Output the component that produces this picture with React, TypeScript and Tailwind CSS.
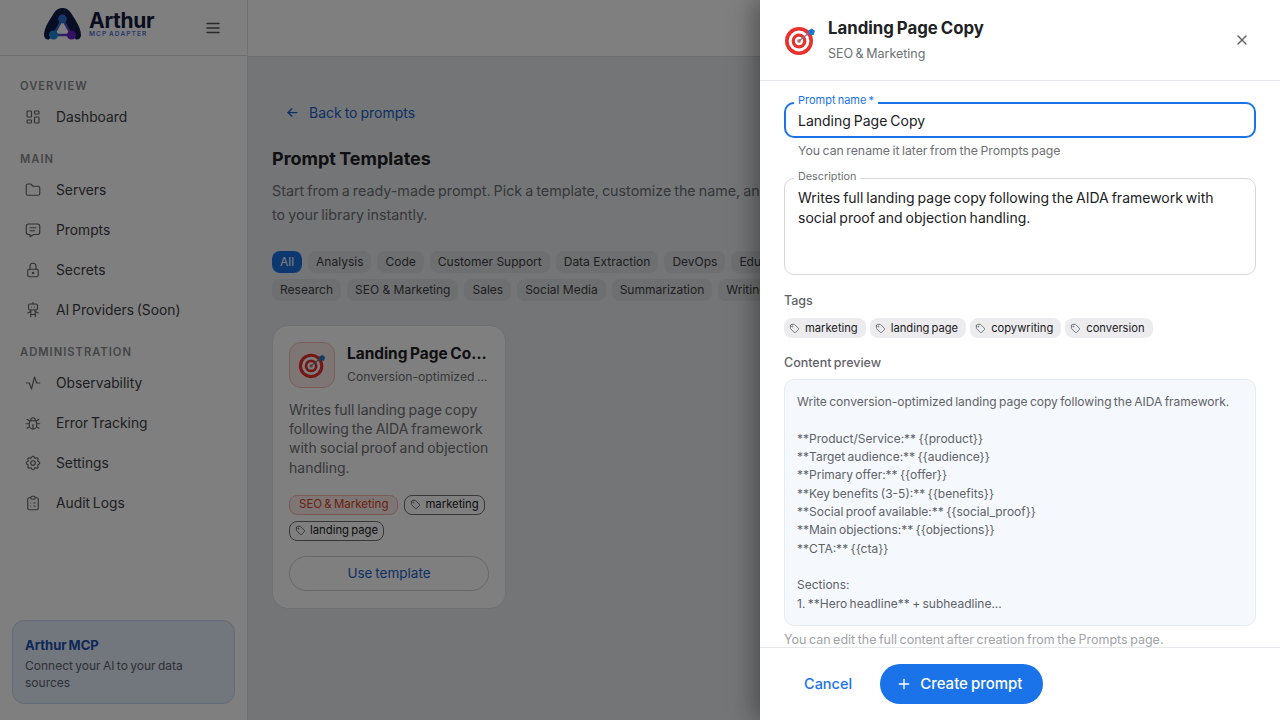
import React from 'react'
import {
  TbActivity, TbArrowLeft, TbBug, TbClipboardList, TbFolder, TbLayoutDashboard, TbLock,
  TbMenu2, TbMessage, TbPlus, TbRobot, TbSettings, TbTag, TbX,
} from 'react-icons/tb'

const NAV = [
  { title: 'OVERVIEW', items: [{ label: 'Dashboard', icon: TbLayoutDashboard }] },
  {
    title: 'MAIN',
    items: [
      { label: 'Servers', icon: TbFolder },
      { label: 'Prompts', icon: TbMessage },
      { label: 'Secrets', icon: TbLock },
      { label: 'AI Providers (Soon)', icon: TbRobot },
    ],
  },
  {
    title: 'ADMINISTRATION',
    items: [
      { label: 'Observability', icon: TbActivity },
      { label: 'Error Tracking', icon: TbBug },
      { label: 'Settings', icon: TbSettings },
      { label: 'Audit Logs', icon: TbClipboardList },
    ],
  },
]

const CHIPS = [
  'Analysis', 'Code', 'Customer Support', 'Data Extraction', 'DevOps', 'Education',
  'Research', 'SEO & Marketing', 'Sales', 'Social Media', 'Summarization', 'Writing',
]

const PREVIEW = `Write conversion-optimized landing page copy following the AIDA framework.

**Product/Service:** {{product}}
**Target audience:** {{audience}}
**Primary offer:** {{offer}}
**Key benefits (3-5):** {{benefits}}
**Social proof available:** {{social_proof}}
**Main objections:** {{objections}}
**CTA:** {{cta}}

Sections:
1. **Hero headline** + subheadline...`

function Logo() {
  return (
    <svg width="40" height="34" viewBox="0 0 40 34" fill="none">
      <defs>
        <linearGradient id="tri" x1="8" y1="10" x2="30" y2="28" gradientUnits="userSpaceOnUse">
          <stop stopColor="#2a8be0" />
          <stop offset="1" stopColor="#6a22c8" />
        </linearGradient>
      </defs>
      <path d="M1 27C1 19 8 10 11 5C13 1.5 16 0 19.5 0C23 0 26 1.5 28 5C31 10 38 19 38 27C38 30 36 32 33 31.5L28 26L19.5 10L10.5 26L6 31.5C3 32 1 30 1 27Z" fill="#0f1b45" />
      <path d="M19.5 11L10.5 27H28.5Z" stroke="url(#tri)" strokeWidth="2.4" strokeLinejoin="round" />
      <circle cx="19.5" cy="11" r="4.4" fill="#2a6fd6" />
      <circle cx="10.5" cy="27" r="4.6" fill="#1b86d8" />
      <circle cx="28.5" cy="27" r="4.6" fill="#6a22c8" />
    </svg>
  )
}

function Target({ size }: { size: number }) {
  return (
    <svg width={size} height={size} viewBox="0 0 32 32" fill="none">
      <circle cx="15" cy="17" r="14" fill="#e8302c" />
      <circle cx="15" cy="17" r="10.4" fill="#ffffff" />
      <circle cx="15" cy="17" r="7.4" fill="#e8302c" />
      <circle cx="15" cy="17" r="4.2" fill="#ffffff" />
      <circle cx="15" cy="17" r="1.9" fill="#d9706c" />
      <path d="M15 17L26 8" stroke="#6b7a88" strokeWidth="1.2" />
      <path d="M24 6.5L28 4.5L31 7L29.5 11L26 11Z" fill="#1479d0" />
    </svg>
  )
}

function Sidebar() {
  return (
    <aside className="flex w-[248px] shrink-0 flex-col border-r border-[#e4e4e6] bg-white">
      <div className="flex h-[56px] shrink-0 items-center border-b border-[#dcdcde] pl-[43px] pr-[25px]">
        <div className="-mt-[6px] flex items-center">
          <Logo />
          <div className="ml-[6px] flex flex-col leading-none">
            <span className="text-[21px] font-bold leading-[20px] tracking-[-0.3px] text-[#121a3e]">Arthur</span>
            <span className="text-[6.5px] font-semibold leading-[7px] tracking-[1.1px] text-[#4f6fd8]">MCP ADAPTER</span>
          </div>
        </div>
        <TbMenu2 className="ml-auto text-[#555]" size={18} />
      </div>
      <nav className="flex flex-1 flex-col px-[20px] pt-[19px]">
        {NAV.map(s => (
          <div key={s.title} className="mb-[11px]">
            <div className="flex h-[22px] items-center text-[11.2px] font-semibold tracking-[1px] text-[#8a8c90]">{s.title}</div>
            {s.items.map(i => {
              const Icon = i.icon
              return (
                <div key={i.label} className="flex h-[40px] items-center gap-[14px] pl-[4px] text-[13.8px] text-[#3c3f44]">
                  <Icon size={18} className="shrink-0 text-[#5f6368]" strokeWidth={1.5} />
                  <span>{i.label}</span>
                </div>
              )
            })}
          </div>
        ))}
      </nav>
      <div className="mx-[12px] mb-[16px] h-[84px] rounded-[12px] border border-[#c9d6f2] bg-[#e4ecfb] px-[12px] pt-[14px]">
        <div className="text-[13px] font-bold leading-[20px] text-[#1a4fb0]">Arthur MCP</div>
        <div className="mt-[2px] text-[12px] leading-[17px] text-[#5f6368]">Connect your AI to your data sources</div>
      </div>
    </aside>
  )
}

function Main() {
  return (
    <main className="flex min-w-0 flex-1 flex-col bg-[#e9ebee]">
      <div className="h-[57px] shrink-0 border-b border-[#dcdde0] bg-white" />
      <div className="px-[24px] pt-[43px]">
        <div className="flex h-[24px] items-center gap-[9px] pl-[13px] text-[14px] text-[#1a5fc8]">
          <TbArrowLeft size={15} />
          <span>Back to prompts</span>
        </div>
        <h1 className="mt-[21px] text-[18px] font-bold leading-[28px] text-[#202124]">Prompt Templates</h1>
        <p className="mt-[6px] w-[540px] text-[14.3px] leading-[24px] text-[#6d7074]">
          Start from a ready-made prompt. Pick a template, customize the name, and add it to your library instantly.
        </p>
        <div className="mt-[24px] flex w-[580px] flex-wrap gap-[6px]">
          <span className="flex h-[22px] items-center rounded-[8px] bg-[#1a6fe0] px-[8px] text-[12px] text-white">All</span>
          {CHIPS.map(c => (
            <span key={c} className="flex h-[22px] items-center rounded-[8px] bg-[#dcdee1] px-[8px] text-[12px] text-[#3c3f44] [word-spacing:0]">{c}</span>
          ))}
        </div>
        <div className="mt-[24px] grid grid-cols-4 gap-[16px]">
          <div className="flex h-[284px] flex-col rounded-[16px] border border-[#dfe0e3] bg-white p-[16px]">
            <div className="flex gap-[12px]">
              <div className="flex h-[46px] w-[46px] shrink-0 items-center justify-center rounded-[12px] border border-[#f3bcb0] bg-[#fdece8]">
                <Target size={28} />
              </div>
              <div className="min-w-0 flex-1 pt-[1px]">
                <div className="truncate text-[15.4px] font-bold leading-[22px] text-[#202124]">Landing Page Copy</div>
                <div className="mt-[2px] truncate text-[12.2px] leading-[20px] text-[#6d7074]">Conversion-optimized landing page</div>
              </div>
            </div>
            <p className="mt-[12px] text-[14px] leading-[19.2px] text-[#6d7074]">
              Writes full landing page copy following the AIDA framework with social proof and objection handling.
            </p>
            <div className="mt-[18px] flex flex-wrap gap-[6px]">
              <span className="flex h-[20px] items-center rounded-[8px] border border-[#f3b6a6] bg-[#fdece8] px-[9px] text-[11.5px] text-[#d8431f]">SEO &amp; Marketing</span>
              {['marketing', 'landing page'].map(t => (
                <span key={t} className="flex h-[20px] items-center gap-[4px] rounded-[8px] border border-[#6f7175] px-[5px] text-[11.3px] text-[#202124]">
                  <TbTag size={11} className="text-[#5f6368]" />
                  {t}
                </span>
              ))}
            </div>
            <div className="mt-[15px] flex h-[35px] items-center justify-center rounded-full border border-[#cfd1d4] text-[13.5px] text-[#1a5fc8]">Use template</div>
          </div>
        </div>
      </div>
    </main>
  )
}

function Drawer() {
  return (
    <div className="absolute bottom-0 right-0 top-0 flex w-[520px] flex-col bg-white shadow-[-6px_0_22px_rgba(0,0,0,0.35)]">
      <div className="flex h-[81px] shrink-0 items-center border-b border-[#e6e8ec] pl-[24px] pr-[30px]">
        <Target size={32} />
        <div className="ml-[12px] -mt-[2px]">
          <div className="text-[16.8px] font-bold leading-[26px] text-[#202124]">Landing Page Copy</div>
          <div className="mt-[3px] text-[12.5px] leading-[20px] text-[#6d7074]">SEO &amp; Marketing</div>
        </div>
        <TbX size={16} className="ml-auto text-[#5f6368]" />
      </div>

      <div className="min-h-0 flex-1 overflow-hidden px-[24px] pt-[21px]">
        <div className="relative">
          <span className="absolute -top-[9px] left-[10px] bg-white px-[4px] text-[11px] leading-[14px] text-[#1a73e8]">Prompt name *</span>
          <div className="flex h-[36px] items-center rounded-[10px] border-2 border-[#1a73e8] pl-[12px] pt-[1px] text-[14px] text-[#202124]">Landing Page Copy</div>
        </div>
        <div className="mt-[5px] pl-[14px] text-[12.3px] leading-[16px] text-[#6d7074]">You can rename it later from the Prompts page</div>

        <div className="relative mt-[19px]">
          <span className="absolute -top-[8px] left-[10px] bg-white px-[4px] text-[10.8px] leading-[14px] text-[#6d7074]">Description</span>
          <div className="h-[97px] rounded-[10px] border border-[#d6d8dc] px-[13px] pt-[9px] text-[14px] leading-[20px] text-[#202124]">
            Writes full landing page copy following the AIDA framework with social proof and objection handling.
          </div>
        </div>

        <div className="mt-[17px] text-[12.5px] font-medium leading-[18px] text-[#5f6368]">Tags</div>
        <div className="mt-[8px] flex gap-[4px]">
          {['marketing', 'landing page', 'copywriting', 'conversion'].map(t => (
            <span key={t} className="flex h-[20px] items-center gap-[5px] rounded-[8px] bg-[#ececee] pl-[5px] pr-[8px] text-[11.2px] text-[#202124]">
              <TbTag size={11} className="text-[#6d7074]" />
              {t}
            </span>
          ))}
        </div>

        <div className="mt-[16px] text-[12.5px] font-medium leading-[18px] text-[#5f6368]">Content preview</div>
        <div className="mt-[7px] h-[247px] overflow-hidden whitespace-pre-wrap rounded-[10px] border border-[#e6eaf2] bg-[#f5f8fd] px-[12px] pt-[13px] text-[12px] leading-[18.35px] text-[#5f6368]">
          {PREVIEW}
        </div>
        <div className="mt-[6px] text-[12.5px] leading-[16px] text-[#a0a3a8]">You can edit the full content after creation from the Prompts page.</div>
      </div>

      <div className="flex h-[73px] shrink-0 items-center gap-[28px] border-t border-[#e6e8ec] pl-[44px]">
        <span className="text-[14.5px] font-medium text-[#1a73e8]">Cancel</span>
        <span className="flex h-[40px] items-center gap-[8px] rounded-full bg-[#1a73e8] pl-[16px] pr-[21px] text-[15px] font-medium text-white">
          <TbPlus size={16} />
          Create prompt
        </span>
      </div>
    </div>
  )
}

export default function App() {
  return (
    <div className="relative flex h-screen w-screen overflow-hidden font-['Inter',sans-serif] [word-spacing:-1px]">
      <Sidebar />
      <Main />
      <div className="absolute inset-0 bg-black/50" />
      <Drawer />
    </div>
  )
}
